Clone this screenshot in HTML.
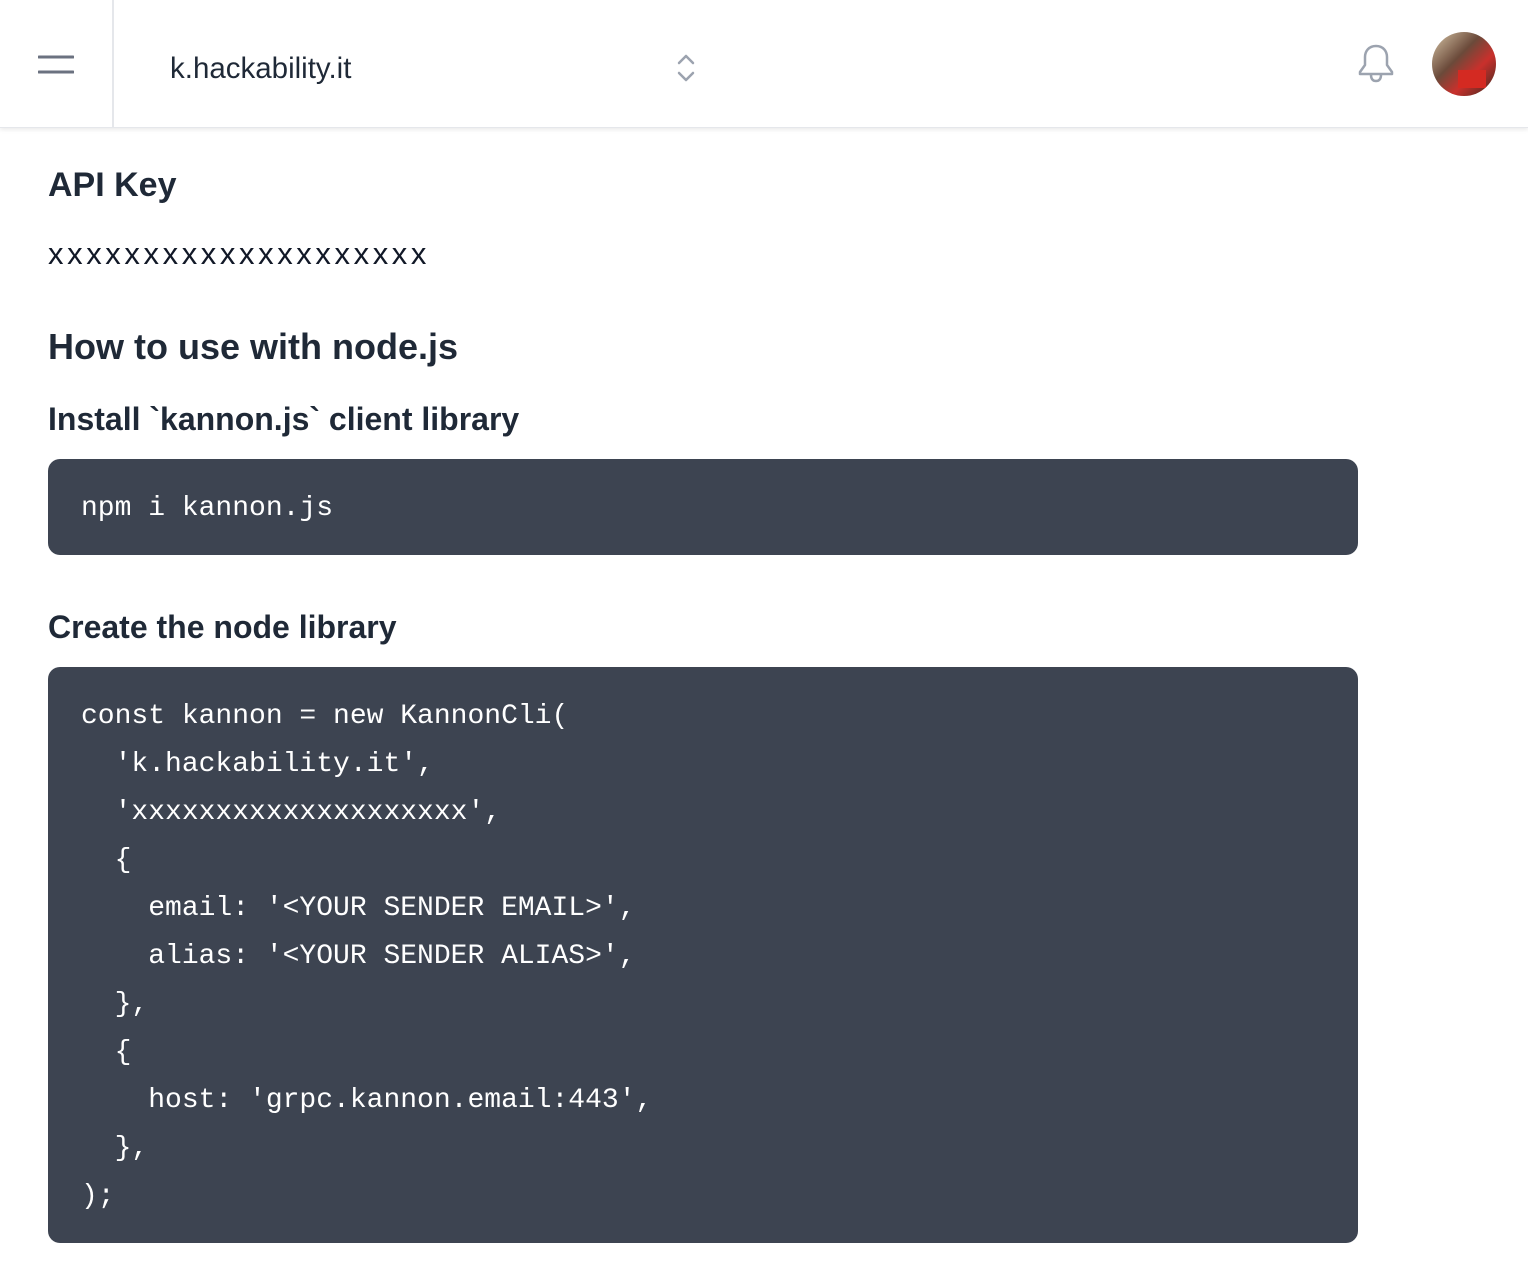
<!DOCTYPE html>
<html><head><meta charset="utf-8"><style>
*{margin:0;padding:0;box-sizing:border-box}
body{width:1528px;height:1266px;background:#fff;font-family:"Liberation Sans",sans-serif;color:#111827;position:relative;overflow:hidden}
.hdr{position:absolute;left:0;top:0;width:1528px;height:128px;background:#fff;box-shadow:0 2px 4px rgba(0,0,0,.08);border-bottom:1px solid #e5e7eb}
.div{position:absolute;left:112px;top:0;width:2px;height:128px;background:#e5e7eb}
.abs{position:absolute}
h1{position:absolute;left:48px;font-weight:bold;color:#1f2937;white-space:nowrap}
pre{position:absolute;left:48px;width:1310px;background:#3d4451;border-radius:12px;color:#fff;font-family:"Liberation Mono",monospace;font-size:28px;line-height:48px;padding:0 33px}
</style></head><body>
<div class="hdr">
<div class="div"></div>
<svg class="abs" style="left:38px;top:55px" width="36" height="20"><path d="M1 2H35M1 17H35" stroke="#6b7280" stroke-width="3" stroke-linecap="round"/></svg>
<div class="abs" style="left:170px;top:52px;font-size:29.5px;color:#1f2937">k.hackability.it</div>
<svg class="abs" style="left:676px;top:52px" width="20" height="32"><path d="M3 11L10 4L17 11M3 21L10 28L17 21" stroke="#9ca3af" stroke-width="2.5" fill="none" stroke-linecap="round" stroke-linejoin="round"/></svg>
<svg class="abs" style="left:1356px;top:43px" width="40" height="42"><path d="M20 3C13 3 9 8 9 14V22L4 29V31H36V29L31 22V14C31 8 27 3 20 3ZM15 32C15 36 17 38 20 38S25 36 25 32" stroke="#9ca3af" stroke-width="2.5" fill="none" stroke-linejoin="round"/></svg>
<div class="abs" style="left:1432px;top:32px;width:64px;height:64px;border-radius:50%;overflow:hidden;background:linear-gradient(135deg,#d8c7a8 0%,#6b4a3a 40%,#c9302c 65%,#3a2a20 100%)">
<div class="abs" style="left:26px;top:38px;width:28px;height:18px;background:#d42a22"></div></div>
</div>
<h1 style="top:166px;font-size:34px">API Key</h1>
<div class="abs" style="left:48px;top:236px;font-size:31px;letter-spacing:3.6px;color:#111827">xxxxxxxxxxxxxxxxxxxx</div>
<h1 style="top:326px;font-size:36px">How to use with node.js</h1>
<h1 style="top:401px;font-size:32px">Install `kannon.js` client library</h1>
<pre style="top:459px;height:96px;padding-top:26px">npm i kannon.js</pre>
<h1 style="top:609px;font-size:32px">Create the node library</h1>
<pre style="top:667px;height:576px;padding-top:26px">const kannon = new KannonCli(
  'k.hackability.it',
  'xxxxxxxxxxxxxxxxxxxx',
  {
    email: '&lt;YOUR SENDER EMAIL&gt;',
    alias: '&lt;YOUR SENDER ALIAS&gt;',
  },
  {
    host: 'grpc.kannon.email:443',
  },
);</pre>
</body></html>
